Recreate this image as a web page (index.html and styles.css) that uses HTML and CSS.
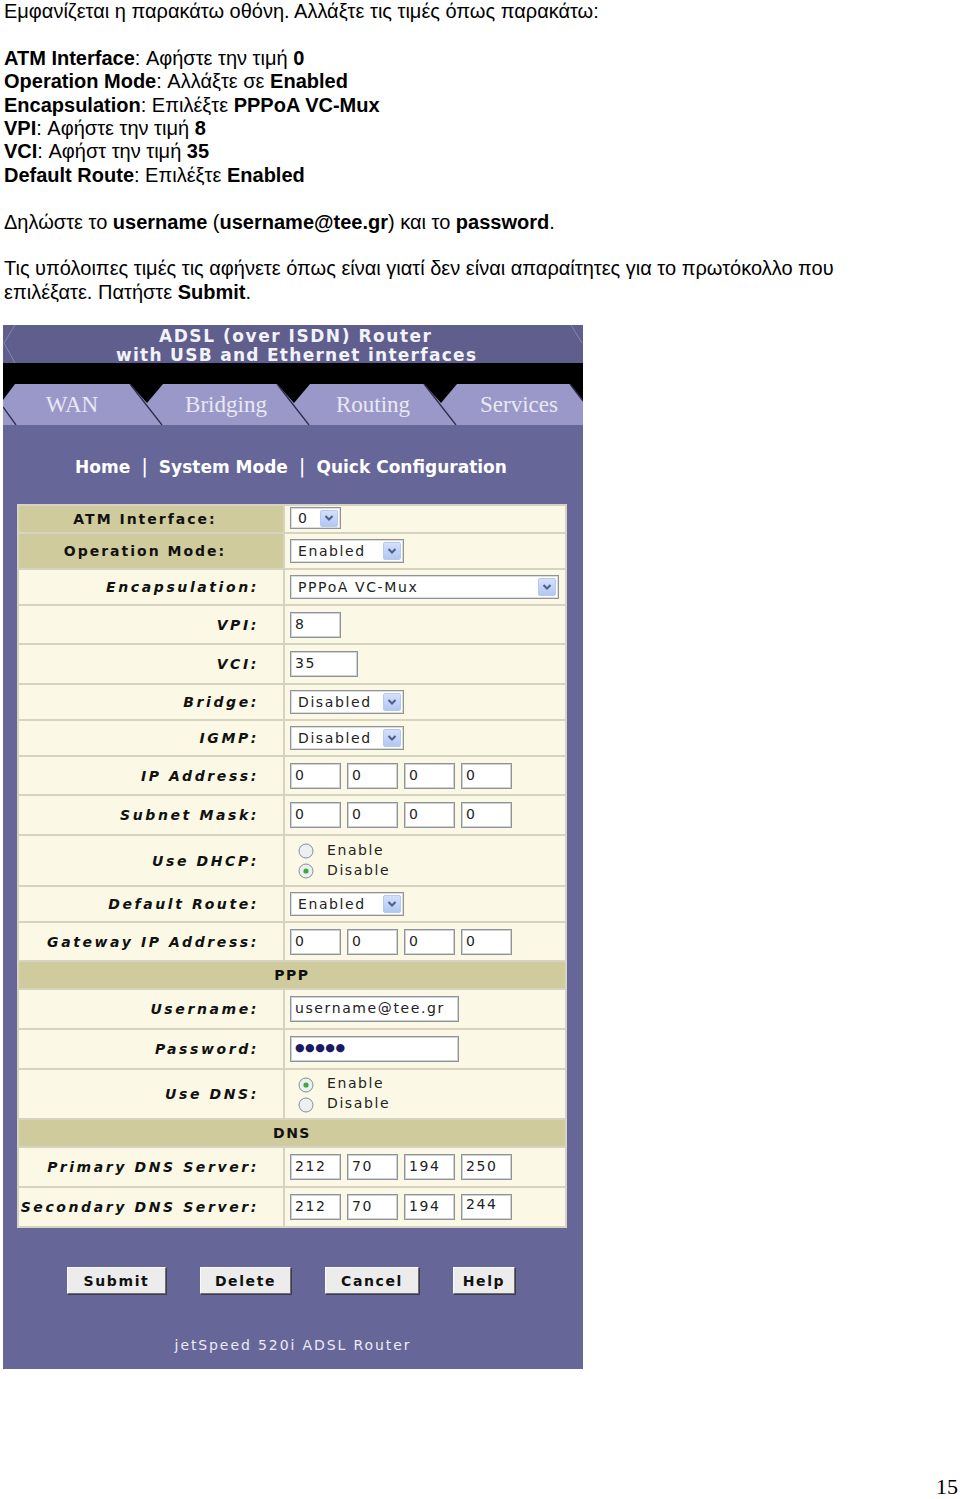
FILE: index.html
```html
<!DOCTYPE html>
<html lang="el">
  <head>
    <meta charset="UTF-8" />
    <title>ADSL Router - Quick Configuration</title>
    <link rel="stylesheet" href="styles.css">
  </head>
  <body>
    <div class="doc">
      <p>Εμφανίζεται η παρακάτω οθόνη. Αλλάξτε τις τιμές όπως παρακάτω:</p>
      <p>
        <b>ATM Interface</b>: Αφήστε την τιμή <b>0</b><br>
        <b>Operation Mode</b>: Αλλάξτε σε <b>Enabled</b><br>
        <b>Encapsulation</b>: Επιλέξτε <b>PPPoA VC-Mux</b><br>
        <b>VPI</b>: Αφήστε την τιμή <b>8</b><br>
        <b>VCI</b>: Αφήστ την τιμή <b>35</b><br>
        <b>Default Route</b>: Επιλέξτε <b>Enabled</b>
      </p>
      <p>Δηλώστε το <b>username</b> (<b>username@tee.gr</b>) και το <b>password</b>.</p>
      <p class="last">Τις υπόλοιπες τιμές τις αφήνετε όπως είναι γιατί δεν είναι απαραίτητες για το πρωτόκολλο που επιλέξατε. Πατήστε <b>Submit</b>.</p>
    </div>

    <div class="router">
      <svg class="banner" width="580" height="100" viewBox="0 0 580 100">
        <rect x="0" y="0" width="580" height="38" fill="#5f5e8c"/>
        <polyline points="12,0 1,18 12,38" fill="none" stroke="#8786ad" stroke-width="1"/>
        <polyline points="568,0 579,18" fill="none" stroke="#8786ad" stroke-width="1"/>
        <text x="292" y="17" text-anchor="middle" textLength="272" class="b-title">ADSL (over ISDN) Router</text>
        <text x="293" y="36" text-anchor="middle" textLength="360" class="b-title">with USB and Ethernet interfaces</text>
        <rect x="0" y="38" width="580" height="22" fill="#000"/>
        <rect x="0" y="59" width="580" height="41" fill="#9a98c9"/>
        <polygon points="0,59 12,59 0,75" fill="#000"/>
        <polygon points="127,59 160,59 144,78" fill="#000"/>
        <polygon points="274,59 307,59 291,78" fill="#000"/>
        <polygon points="421,59 454,59 438,78" fill="#000"/>
        <polygon points="567,59 580,59 580,76" fill="#000"/>
        <g stroke="#2c2b48" stroke-width="1.3">
          <line x1="0" y1="82" x2="13" y2="100"/>
          <line x1="127" y1="59" x2="159" y2="100"/>
          <line x1="274" y1="59" x2="306" y2="100"/>
          <line x1="421" y1="59" x2="453" y2="100"/>
          <line x1="567" y1="59" x2="580" y2="76"/>
        </g>
        <text x="69" y="87" text-anchor="middle" class="b-tab">WAN</text>
        <text x="223" y="87" text-anchor="middle" class="b-tab">Bridging</text>
        <text x="370" y="87" text-anchor="middle" class="b-tab">Routing</text>
        <text x="516" y="87" text-anchor="middle" class="b-tab">Services</text>
      </svg>

      <div class="nav">Home <span class="sep">|</span> System Mode <span class="sep">|</span> Quick Configuration</div>

      <table class="cfg">
        <tr class="h26">
          <td class="lbl head">ATM Interface:</td>
          <td class="val top"><span class="sel w51 short"><span class="opt">0</span><span class="arr"><svg width="10" height="8" viewBox="0 0 10 8"><polyline points="1.5,2 5,5.5 8.5,2" fill="none" stroke="#4a5f8c" stroke-width="2"/></svg></span></span></td>
        </tr>
        <tr class="h34">
          <td class="lbl head">Operation Mode:</td>
          <td class="val"><span class="sel w114"><span class="opt">Enabled</span><span class="arr"><svg width="10" height="8" viewBox="0 0 10 8"><polyline points="1.5,2 5,5.5 8.5,2" fill="none" stroke="#4a5f8c" stroke-width="2"/></svg></span></span></td>
        </tr>
        <tr class="h34">
          <td class="lbl">Encapsulation:</td>
          <td class="val"><span class="sel w269"><span class="opt">PPPoA VC-Mux</span><span class="arr"><svg width="10" height="8" viewBox="0 0 10 8"><polyline points="1.5,2 5,5.5 8.5,2" fill="none" stroke="#4a5f8c" stroke-width="2"/></svg></span></span></td>
        </tr>
        <tr class="h37">
          <td class="lbl">VPI:</td>
          <td class="val"><span class="fld w51">8</span></td>
        </tr>
        <tr class="h38">
          <td class="lbl">VCI:</td>
          <td class="val"><span class="fld w68">35</span></td>
        </tr>
        <tr class="h34">
          <td class="lbl">Bridge:</td>
          <td class="val"><span class="sel w114"><span class="opt">Disabled</span><span class="arr"><svg width="10" height="8" viewBox="0 0 10 8"><polyline points="1.5,2 5,5.5 8.5,2" fill="none" stroke="#4a5f8c" stroke-width="2"/></svg></span></span></td>
        </tr>
        <tr class="h34">
          <td class="lbl">IGMP:</td>
          <td class="val"><span class="sel w114"><span class="opt">Disabled</span><span class="arr"><svg width="10" height="8" viewBox="0 0 10 8"><polyline points="1.5,2 5,5.5 8.5,2" fill="none" stroke="#4a5f8c" stroke-width="2"/></svg></span></span></td>
        </tr>
        <tr class="h37">
          <td class="lbl">IP Address:</td>
          <td class="val"><div class="ip"><span class="fld w51">0</span><span class="fld w51">0</span><span class="fld w51">0</span><span class="fld w51">0</span></div></td>
        </tr>
        <tr class="h38">
          <td class="lbl">Subnet Mask:</td>
          <td class="val"><div class="ip"><span class="fld w51">0</span><span class="fld w51">0</span><span class="fld w51">0</span><span class="fld w51">0</span></div></td>
        </tr>
        <tr class="h49">
          <td class="lbl">Use DHCP:</td>
          <td class="val">
            <div class="radios">
              <div class="radio"><svg width="16" height="16" viewBox="0 0 16 16"><circle cx="8" cy="8" r="7" fill="#eef0f0" stroke="#7d8fa6"/></svg>Enable</div>
              <div class="radio"><svg width="16" height="16" viewBox="0 0 16 16"><circle cx="8" cy="8" r="7" fill="#eef0f0" stroke="#7d8fa6"/><circle cx="8" cy="8" r="2.6" fill="#3caa3c"/></svg>Disable</div>
            </div>
          </td>
        </tr>
        <tr class="h34">
          <td class="lbl">Default Route:</td>
          <td class="val"><span class="sel w114"><span class="opt">Enabled</span><span class="arr"><svg width="10" height="8" viewBox="0 0 10 8"><polyline points="1.5,2 5,5.5 8.5,2" fill="none" stroke="#4a5f8c" stroke-width="2"/></svg></span></span></td>
        </tr>
        <tr class="h37">
          <td class="lbl">Gateway IP Address:</td>
          <td class="val"><div class="ip"><span class="fld w51">0</span><span class="fld w51">0</span><span class="fld w51">0</span><span class="fld w51">0</span></div></td>
        </tr>
        <tr class="h26">
          <td class="section" colspan="2">PPP</td>
        </tr>
        <tr class="h38">
          <td class="lbl">Username:</td>
          <td class="val"><span class="fld w169">username@tee.gr</span></td>
        </tr>
        <tr class="h38">
          <td class="lbl">Password:</td>
          <td class="val"><span class="fld w169 pw">●●●●●</span></td>
        </tr>
        <tr class="h48">
          <td class="lbl">Use DNS:</td>
          <td class="val">
            <div class="radios">
              <div class="radio"><svg width="16" height="16" viewBox="0 0 16 16"><circle cx="8" cy="8" r="7" fill="#eef0f0" stroke="#7d8fa6"/><circle cx="8" cy="8" r="2.6" fill="#3caa3c"/></svg>Enable</div>
              <div class="radio"><svg width="16" height="16" viewBox="0 0 16 16"><circle cx="8" cy="8" r="7" fill="#eef0f0" stroke="#7d8fa6"/></svg>Disable</div>
            </div>
          </td>
        </tr>
        <tr class="h26">
          <td class="section" colspan="2">DNS</td>
        </tr>
        <tr class="h38">
          <td class="lbl">Primary DNS Server:</td>
          <td class="val"><div class="ip"><span class="fld w51">212</span><span class="fld w51">70</span><span class="fld w51">194</span><span class="fld w51">250</span></div></td>
        </tr>
        <tr class="h38">
          <td class="lbl">Secondary DNS Server:</td>
          <td class="val"><div class="ip"><span class="fld w51">212</span><span class="fld w51">70</span><span class="fld w51">194</span><span class="fld w51 hi">244</span></div></td>
        </tr>
      </table>

      <div class="actions">
        <button class="btn b-submit">Submit</button>
        <button class="btn b-delete">Delete</button>
        <button class="btn b-cancel">Cancel</button>
        <button class="btn b-help">Help</button>
      </div>

      <div class="footer">jetSpeed 520i ADSL Router</div>
    </div>

    <div class="pageno">15</div>
  </body>
</html>
```

FILE: styles.css
```css
html{
    box-sizing: border-box;
}
*, *::before, *::after{
    box-sizing: inherit;
}

body{
    margin: 0;
    background: #fff;
    color: #000;
    font-family: "Liberation Sans", Arial, sans-serif;
}

/* document text */
.doc{
    width: 870px;
    padding-left: 4px;
    font-size: 20px;
    line-height: 23.4px;
}
.doc p{
    margin: 0 0 23.4px;
}
.doc p.last{
    margin-bottom: 21px;
}

/* router screen */
.router{
    width: 580px;
    margin-left: 3px;
    background: #666699;
    font-family: "DejaVu Sans", Verdana, sans-serif;
}
.banner{
    display: block;
}
.b-title{
    fill: #f2f2fa;
    font-family: "DejaVu Sans", Verdana, sans-serif;
    font-weight: bold;
    font-size: 17px;
}
.b-tab{
    fill: #e9e8f4;
    font-family: "Liberation Serif", "Times New Roman", serif;
    font-size: 23px;
}

.nav{
    padding-top: 31px;
    height: 79px;
    text-align: center;
    color: #fff;
    font-weight: bold;
    font-size: 17px;
    line-height: 20px;
    padding-right: 4px;
}
.nav .sep{
    font-weight: normal;
    font-size: 20px;
    margin: 0 5px;
}

/* config table */
.cfg{
    margin-left: 14px;
    width: 550px;
    border-collapse: separate;
    border-spacing: 2px;
    background: #d6d3c1;
}
.cfg td{
    padding: 0;
    background: #fbf9e5;
    vertical-align: middle;
    line-height: 16px;
}
.h26 td{ height: 26px; }
.h34 td{ height: 34px; }
.h37 td{ height: 37px; }
.h38 td{ height: 38px; }
.h48 td{ height: 48px; }
.h49 td{ height: 49px; }

.lbl{
    width: 264px;
    text-align: right;
    padding-right: 24px !important;
    font-weight: bold;
    font-style: italic;
    font-size: 14px;
    letter-spacing: 2.6px;
    color: #111;
    white-space: nowrap;
}
.cfg td.head{
    background: #cfcb9c;
    font-style: normal;
    text-align: center;
    letter-spacing: 2px;
    padding-right: 12px !important;
}
.cfg td.section{
    background: #cfcb9c;
    text-align: center;
    font-weight: bold;
    font-size: 14px;
    letter-spacing: 1.5px;
    color: #111;
}
.val{
    padding-left: 5px !important;
    font-size: 14px;
    letter-spacing: 1.6px;
    color: #222;
}
.cfg td.top{
    vertical-align: top;
    padding-top: 1px;
}

/* fake form controls */
.fld{
    display: inline-block;
    height: 26px;
    line-height: 22px;
    padding-left: 4px;
    background: #fff;
    border: 1px solid #8e9499;
    box-shadow: inset 0 0 0 1px #cfd2d4;
    vertical-align: middle;
    white-space: nowrap;
}
.fld.pw{
    color: #1a1a66;
    font-size: 11px;
    letter-spacing: 0.5px;
}
.fld.hi{
    line-height: 18px;
}
.w51{ width: 51px; }
.w68{ width: 68px; }
.w114{ width: 114px; }
.w169{ width: 169px; }
.w269{ width: 269px; }

.ip{
    display: flex;
    gap: 6px;
}

.sel{
    display: inline-flex;
    align-items: center;
    justify-content: space-between;
    height: 24px;
    padding: 0 2px 0 7px;
    background: #fff;
    border: 1px solid #8e9499;
    box-shadow: inset 0 0 0 1px #dadcde;
    vertical-align: middle;
}
.sel.short{
    height: 22px;
}
.sel .arr{
    display: flex;
    align-items: center;
    justify-content: center;
    width: 18px;
    height: 18px;
    background: linear-gradient(#d4e0fb, #b4c7f2);
    border: 1px solid #b9c9ee;
    border-radius: 2px;
}
.sel.short .arr{
    height: 17px;
}

.radios{
    padding-left: 8px;
    margin-top: -2px;
}
.radio{
    display: flex;
    align-items: center;
    height: 20px;
    line-height: 20px;
}
.radio svg{
    margin-right: 13px;
    margin-top: 3px;
}

/* buttons */
.actions{
    display: flex;
    justify-content: center;
    gap: 34px;
    padding-top: 39px;
    padding-right: 4px;
}
.btn{
    height: 27px;
    padding: 0;
    font-family: "DejaVu Sans", Verdana, sans-serif;
    font-weight: bold;
    font-size: 14px;
    letter-spacing: 1.6px;
    color: #111;
    background: #ececec;
    border: 1px solid;
    border-color: #fafafa #6f6f6f #6f6f6f #fafafa;
    box-shadow: 1px 1px 0 #3c3c50;
}
.b-submit{ width: 99px; }
.b-delete{ width: 91px; }
.b-cancel{ width: 94px; }
.b-help{ width: 62px; }

.footer{
    padding: 43px 0 16px;
    text-align: center;
    color: #ecebf5;
    font-size: 14px;
    line-height: 16px;
    letter-spacing: 1.9px;
}

.pageno{
    margin-top: 106px;
    text-align: right;
    padding-right: 2px;
    font-family: "Liberation Serif", "Times New Roman", serif;
    font-size: 22px;
    line-height: 24px;
}
```
